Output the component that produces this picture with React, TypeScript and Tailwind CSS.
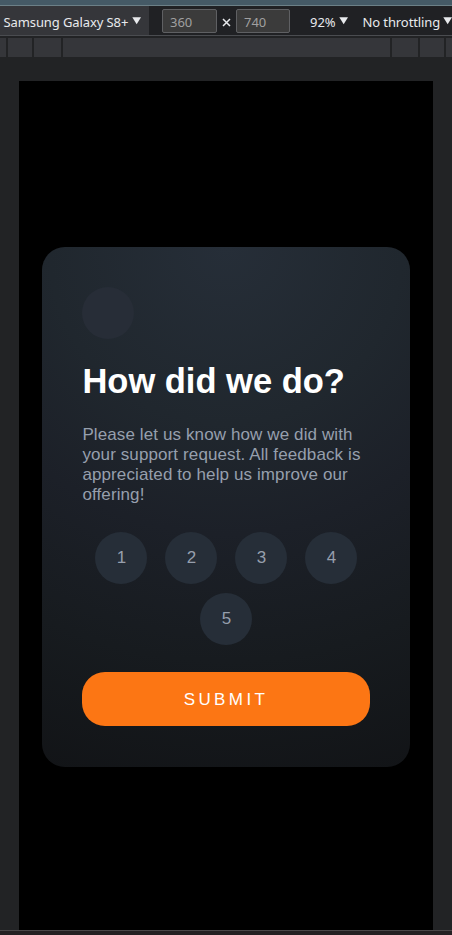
import React from "react";

const ratings = [1, 2, 3, 4, 5];

function Caret() {
  return (
    <svg width="9" height="8" viewBox="0 0 9 8" className="shrink-0 fill-[#e8eaed]">
      <path d="M0.3 0.3H9L4.7 7.3Z" />
    </svg>
  );
}

function Toolbar() {
  return (
    <div className="flex h-[30px] w-[460px] shrink-0 items-center border-b border-[#4a4c50] bg-[#202124] font-['Noto_Sans',sans-serif] text-[13px] leading-[18px] whitespace-nowrap text-[#e8eaed]">
      <div className="flex h-[29px] w-[149px] items-center bg-[#35363a] pl-[3.5px]">
        <span className="w-[128.5px] pt-[2px] tracking-[-0.1px]">Samsung Galaxy S8+</span>
        <Caret />
      </div>
      <div className="ml-[13px] flex h-6 w-[55px] items-center rounded-[2px] border border-[#5f6063] bg-[#3b3b3b] pt-[2px] pl-[7px] text-[#a0a0a0]">360</div>
      <svg width="9" height="9" viewBox="0 0 9 9" className="mx-[5px] mt-[3px] stroke-[#e8eaed]" strokeWidth="1.5">
        <path d="M1 1L8 8M8 1L1 8" />
      </svg>
      <div className="flex h-6 w-[54px] items-center rounded-[2px] border border-[#5f6063] bg-[#3b3b3b] pt-[2px] pl-[7px] text-[#a0a0a0]">740</div>
      <span className="ml-5 w-[29px] pt-[2px]">92%</span>
      <Caret />
      <span className="ml-[14.5px] w-[80.5px] pt-[2px] tracking-[-0.1px]">No throttling</span>
      <Caret />
    </div>
  );
}

function Ruler() {
  return (
    <div className="mt-[2px] flex h-[19px] w-[460px] shrink-0 gap-[2px]">
      <div className="w-[6px] bg-[#35363a]" />
      <div className="w-6 bg-[#35363a]" />
      <div className="w-[27px] bg-[#35363a]" />
      <div className="w-[327px] bg-[#35363a]" />
      <div className="w-[26px] bg-[#35363a]" />
      <div className="w-6 bg-[#35363a]" />
      <div className="grow bg-[#35363a]" />
    </div>
  );
}

function RatingCard() {
  return (
    <main className="h-[520px] w-[368px] rounded-[23px] bg-[radial-gradient(circle_at_top,#262e38_0%,#20272e_32%,#1c2028_52%,#171b1f_75%,#121417_100%)] px-[40.4px] pt-[40.5px] font-['Liberation_Sans',Arial,sans-serif]">
      <div className="size-[52px] rounded-full bg-[#272d37]" />
      <h1 className="mt-[22px] text-[34.5px] leading-[40px] font-bold whitespace-nowrap text-white">How did we do?</h1>
      <p className="mt-[24px] text-[17px] leading-5 tracking-[0.11px] whitespace-nowrap text-[#969fad]">
        Please let us know how we did with<br />
        your support request. All feedback is<br />
        appreciated to help us improve our<br />
        offering!
      </p>
      <div className="mt-[26.5px] flex flex-wrap justify-center gap-x-[18px] gap-y-[9px]">
        {ratings.map((rating) => (
          <button key={rating} className="size-[52px] rounded-full bg-[#262e38] pl-px text-[17px] leading-5 text-[#969fad]">
            {rating}
          </button>
        ))}
      </div>
      <button className="mt-[27px] h-[54px] w-full rounded-[23px] bg-[#fc7614] pt-[2px] text-[17px] leading-5 tracking-[3.4px] text-white">SUBMIT</button>
    </main>
  );
}

export default function App() {
  return (
    <div className="flex h-[935px] w-[452px] flex-col overflow-hidden bg-[#222325]">
      <div className="h-[6px] shrink-0 border-b border-[#6c8087] bg-[#455a66]" />
      <Toolbar />
      <Ruler />
      <div className="mx-[19px] mt-6 h-[849px] shrink-0 bg-black px-[23px] pt-[165.6px]">
        <RatingCard />
      </div>
      <div className="h-[5px] shrink-0 border-t border-[#4a4748] bg-[#242022]" />
    </div>
  );
}
